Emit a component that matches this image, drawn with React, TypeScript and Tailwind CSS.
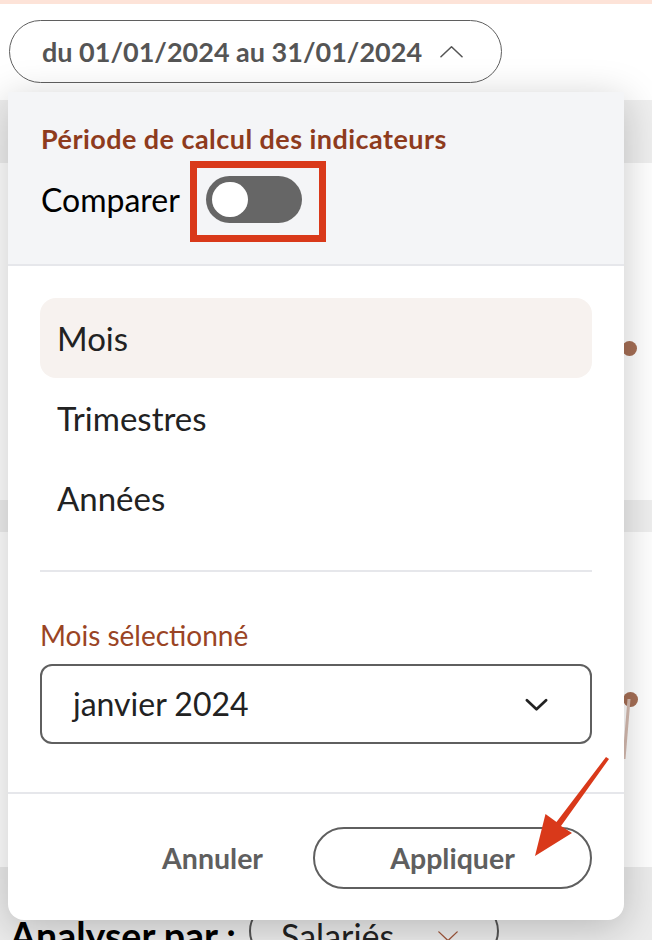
import React from "react";

function ChevronUp({ className }: { className?: string }) {
  return (
    <svg className={className} viewBox="0 0 24 13" fill="none" stroke="currentColor" strokeWidth="1.6" strokeLinecap="round" strokeLinejoin="round">
      <path d="M1 12 L12 1.5 L23 12" />
    </svg>
  );
}

function ChevronDown({ className, w = 2 }: { className?: string; w?: number }) {
  return (
    <svg className={className} viewBox="0 0 24 13" fill="none" stroke="currentColor" strokeWidth={w} strokeLinecap="round" strokeLinejoin="round">
      <path d="M2 2 L12 11.5 L22 2" />
    </svg>
  );
}

export default function App() {
  return (
    <div className="relative w-[652px] h-[940px] overflow-hidden bg-white font-['Lato',sans-serif]">
      {/* Background page */}
      <div className="h-[4px] bg-[#fde3d8]" />
      <div className="pt-[16px] pl-[9px]">
        <div className="flex h-[63px] w-[493px] items-center rounded-full border-[1.5px] border-[#5f5f5f] pl-[32px]">
          <span className="text-[27px] font-bold leading-none text-[#555555]">du 01/01/2024 au 31/01/2024</span>
          <ChevronUp className="ml-[18px] h-[13px] w-[23px] text-[#555555]" />
        </div>
      </div>
      <div className="mt-[17px] h-[63px] bg-[#efefef]" />
      <div className="relative h-[337px] bg-white">
        <div className="absolute left-[622px] top-[178px] h-[15px] w-[15px] rounded-full bg-[#a66f56]" />
      </div>
      <div className="h-[32px] bg-[#efefef]" />
      <div className="relative h-[335px] bg-white">
        <div className="absolute left-[623px] top-[160px] h-[15px] w-[15px] rounded-full bg-[#a66f56]" />
        <svg className="absolute left-[615px] top-[165px] h-[80px] w-[20px]" viewBox="0 0 20 80">
          <path d="M14 2 L9 62" stroke="#d6bcb1" strokeWidth="3" />
        </svg>
      </div>
      <div className="h-[73px] bg-[#ececec] pl-[10px] pt-[46px]">
        <div className="flex items-center gap-[13px]">
          <span className="text-[37.5px] font-bold leading-none text-black">Analyser par :</span>
          <div className="-mt-[10px] flex h-[56px] w-[250px] items-center rounded-full border-[2px] border-[#555] pl-[30px] pt-[10px]">
            <span className="text-[34px] leading-none text-[#222]">Salariés</span>
            <ChevronDown className="ml-[43px] h-[12px] w-[22px] text-[#a0573c]" w={1.5} />
          </div>
        </div>
      </div>

      {/* Dropdown panel */}
      <div className="absolute left-[8px] top-[92px] flex w-[616px] flex-col overflow-hidden rounded-b-[16px] bg-white shadow-[0_8px_40px_rgba(0,0,0,0.22)]">
        <div className="h-[174px] border-b-[2px] border-[#e6e7eb] bg-[#f4f5f7] pl-[33px] pt-[33px]">
          <div className="text-[27px] font-bold leading-none tracking-[0.45px] text-[#8e3b1d]">Période de calcul des indicateurs</div>
          <div className="relative mt-[24px] flex items-center">
            <span className="text-[32px] leading-none text-black">Comparer</span>
            <div className="relative ml-[26px] h-[47px] w-[96px] rounded-full bg-[#666666]">
              <div className="absolute left-[6px] top-[6px] h-[35px] w-[36px] rounded-full bg-white" />
              <div className="absolute -left-[16px] -top-[15px] h-[81px] w-[136px] border-[7px] border-[#d9391a]" />
            </div>
          </div>
        </div>

        <div className="flex flex-col px-[32px] pt-[32px]">
          <div className="flex h-[80px] items-center rounded-[16px] bg-[#f7f2ef] pl-[17px] text-[33px] leading-none text-[#222]">Mois</div>
          <div className="flex h-[80px] items-center pl-[17px] text-[33px] leading-none text-[#222]">Trimestres</div>
          <div className="flex h-[80px] items-center pl-[17px] text-[33px] leading-none text-[#222]">Années</div>
          <div className="mt-[32px] h-[2px] bg-[#e6e7eb]" />
          <div className="mt-[49px] text-[28px] leading-none text-[#9a4424]">Mois sélectionné</div>
          <div className="mt-[15px] flex h-[80px] items-center justify-between rounded-[12px] border-[2px] border-[#5f5f5f] pl-[31px] pr-[42px]">
            <span className="text-[32px] leading-none text-[#222]">janvier 2024</span>
            <ChevronDown className="h-[13px] w-[23px] text-[#222]" w={2.8} />
          </div>
        </div>

        <div className="mt-[48px] h-[2px] bg-[#e6e7eb]" />
        <div className="flex items-center justify-end gap-[50px] px-[32px] pb-[31px] pt-[33px]">
          <span className="text-[28.5px] font-bold leading-none text-[#5f5f5f]">Annuler</span>
          <div className="flex h-[62px] w-[279px] items-center justify-center rounded-full border-[2px] border-[#5f5f5f]">
            <span className="text-[28.5px] font-bold leading-none text-[#5f5f5f]">Appliquer</span>
          </div>
        </div>
      </div>

      {/* Red annotation arrow */}
      <svg className="pointer-events-none absolute left-0 top-0 h-[940px] w-[652px]" viewBox="0 0 652 940">
        <polygon
          points="535,856 572,833 561,826 609,759 606,757 556.5,822 545.5,814"
          fill="#d9391a"
        />
      </svg>
    </div>
  );
}
